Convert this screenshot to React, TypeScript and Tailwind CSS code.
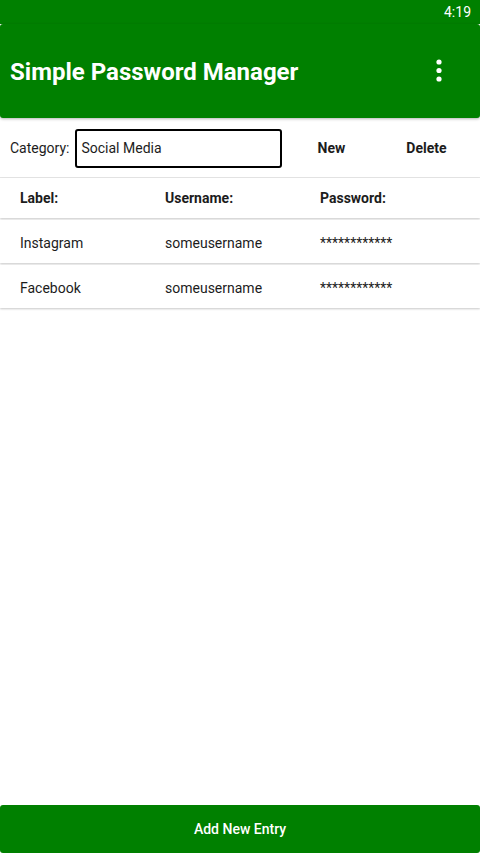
import { useState } from 'react'

const entries = [
  { label: 'Instagram', username: 'someusername', password: '************' },
  { label: 'Facebook', username: 'someusername', password: '************' },
]

function MoreIcon() {
  return (
    <svg width="10" height="26" viewBox="0 0 10 26" fill="white">
      <circle cx="5" cy="4" r="2.6" />
      <circle cx="5" cy="12.5" r="2.6" />
      <circle cx="5" cy="21" r="2.6" />
    </svg>
  )
}

export default function App() {
  const [category, setCategory] = useState('Social Media')

  return (
    <div
      className="w-[480px] h-[853px] flex flex-col bg-white text-[#1c1c1c] overflow-hidden"
      style={{ fontFamily: 'Roboto, "Noto Sans", sans-serif' }}
    >
      {/* Status bar */}
      <div className="h-[24px] bg-[#008000] flex items-center justify-end pr-[9px]">
        <span className="text-white text-[14px] leading-none">4:19</span>
      </div>

      {/* App bar */}
      <div className="h-[94px] bg-[#008000] rounded-[3px] flex items-center justify-between pl-[10px] pr-[36px] shadow-[0_1px_3px_rgba(0,0,0,0.3)] relative z-10">
        <h1 className="text-white text-[24px] font-bold mt-[2px]">Simple Password Manager</h1>
        <MoreIcon />
      </div>

      {/* Category row */}
      <div className="h-[60px] flex items-center border-b border-[#e6e6e6] pl-[10px] pt-[1px]">
        <span className="text-[14px] mr-[6px]">Category:</span>
        <input
          value={category}
          onChange={(e) => setCategory(e.target.value)}
          className="w-[207px] h-[39px] border-2 border-black rounded-[3px] px-[4px] text-[14px] outline-none"
        />
        <button className="w-[96px] text-[14px] font-bold ml-[1px]">New</button>
        <button className="w-[94px] text-[14px] font-bold">Delete</button>
      </div>

      {/* Header row */}
      <div className="h-[40px] grid grid-cols-[165px_155px_1fr] items-center text-[14px] font-bold shadow-[0_1px_2px_rgba(0,0,0,0.22)]">
        <span className="pl-[20px]">Label:</span>
        <span>Username:</span>
        <span>Password:</span>
      </div>

      {/* Entries */}
      <div className="flex flex-col gap-[2px] mt-[2px]">
        {entries.map((e) => (
          <div
            key={e.label}
            className="h-[43px] grid grid-cols-[165px_155px_1fr] items-center pt-[4px] text-[14px] bg-white shadow-[0_1px_2px_rgba(0,0,0,0.22)]"
          >
            <span className="pl-[20px]">{e.label}</span>
            <span>{e.username}</span>
            <span>{e.password}</span>
          </div>
        ))}
      </div>

      <div className="flex-1" />

      {/* Bottom button */}
      <button className="h-[48px] w-full bg-[#008000] rounded-[3px] text-white text-[14px] font-medium">
        Add New Entry
      </button>
    </div>
  )
}
